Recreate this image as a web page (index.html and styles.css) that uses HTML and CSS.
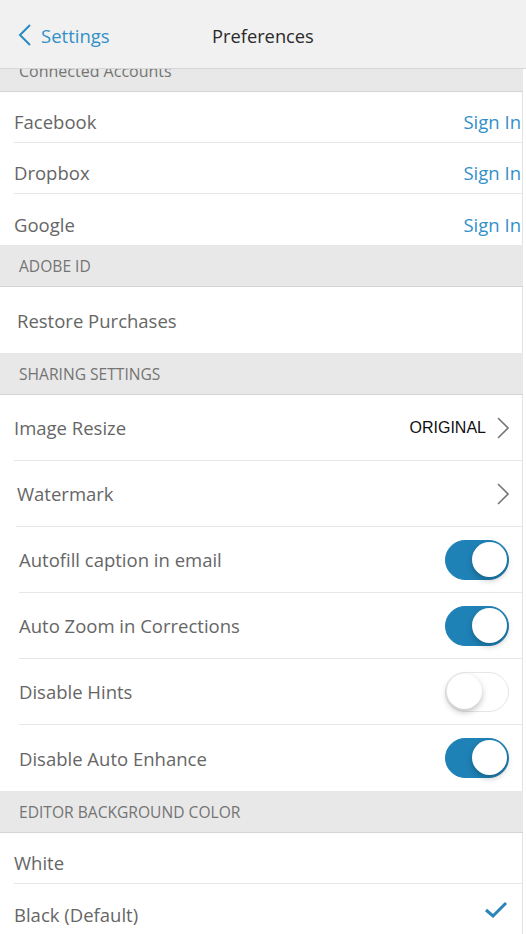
FILE: index.html
```html
<!DOCTYPE html>
<html>
<head>
<meta charset="utf-8">
<link rel="stylesheet" href="styles.css">
</head>
<body>
<div class="screen">
  <header class="nav">
    <div class="back">
      <svg class="back-icon" width="14" height="24" viewBox="0 0 14 24"><path d="M12 2 L2 12 L12 22" fill="none" stroke="#2a8ac4" stroke-width="2"/></svg>
      <span>Settings</span>
    </div>
    <div class="title">Preferences</div>
  </header>
  <main class="content">
    <div class="section-head clipped"><span>Connected Accounts</span></div>
    <div class="row r-account ind-14"><span class="label">Facebook</span><span class="link">Sign In</span></div>
    <div class="row r-account ind-14"><span class="label">Dropbox</span><span class="link">Sign In</span></div>
    <div class="row r-account ind-14 last"><span class="label">Google</span><span class="link">Sign In</span></div>
    <div class="section-head"><span>ADOBE ID</span></div>
    <div class="row r-tall ind-17 last"><span class="label">Restore Purchases</span></div>
    <div class="section-head"><span>SHARING SETTINGS</span></div>
    <div class="row r-tall ind-14"><span class="label">Image Resize</span><span class="value">ORIGINAL<svg class="chev" width="12" height="22" viewBox="0 0 12 22"><path d="M1 1 L11 11 L1 21" fill="none" stroke="#777" stroke-width="1.6"/></svg></span></div>
    <div class="row r-tall ind-17 sep-16"><span class="label">Watermark</span><span class="value"><svg class="chev" width="12" height="22" viewBox="0 0 12 22"><path d="M1 1 L11 11 L1 21" fill="none" stroke="#777" stroke-width="1.6"/></svg></span></div>
    <div class="row r-tall ind-19"><span class="label">Autofill caption in email</span><span class="toggle on"><span class="knob"></span></span></div>
    <div class="row r-tall ind-19"><span class="label">Auto Zoom in Corrections</span><span class="toggle on"><span class="knob"></span></span></div>
    <div class="row r-tall ind-19"><span class="label">Disable Hints</span><span class="toggle"><span class="knob"></span></span></div>
    <div class="row r-tall ind-19 last"><span class="label">Disable Auto Enhance</span><span class="toggle on"><span class="knob"></span></span></div>
    <div class="section-head"><span>EDITOR BACKGROUND COLOR</span></div>
    <div class="row r-account ind-14"><span class="label">White</span></div>
    <div class="row r-account ind-14 last"><span class="label">Black (Default)</span><svg class="check" width="24" height="18" viewBox="0 0 24 18"><path d="M2 9 L9 15 L22 2" fill="none" stroke="#2a84b8" stroke-width="3"/></svg></div>
  </main>
</div>
</body>
</html>
```

FILE: styles.css
```css
* { box-sizing: border-box; }
html, body { margin: 0; padding: 0; background: #fff; }
body {
  font-family: "Open Sans", "Noto Sans", sans-serif;
  color: #555;
  width: 526px;
  height: 934px;
  overflow: hidden;
}
.screen { display: flex; flex-direction: column; height: 934px; }
.nav {
  height: 69px;
  flex: none;
  background: #f1f1f1;
  border-bottom: 1px solid #d6d6d6;
  display: flex;
  align-items: center;
  position: relative;
  z-index: 2;
}
.back {
  display: flex;
  align-items: center;
  gap: 9px;
  padding-left: 18px;
  color: #3290c8;
  font-size: 18.5px;
  width: 212px;
  padding-top: 3px;
}
.back-icon { flex: none; margin-top: -2px; }
.title {
  color: #2a2a2a;
  font-size: 18.3px;
  padding-top: 3px;
}
.content {
  width: 523px;
  border-right: 1px solid #e2e2e2;
  display: flex;
  flex-direction: column;
  flex: 1;
}
.section-head {
  height: 42px;
  flex: none;
  background: #e8e8e8;
  border-bottom: 1px solid #d4d4d4;
  display: flex;
  align-items: center;
  padding-left: 19px;
  font-size: 15.6px;
  color: #747474;
  margin-right: -1px;
}
.section-head.clipped {
  height: 23px;
  align-items: flex-start;
  overflow: hidden;
}
.section-head.clipped span { margin-top: -9px; font-size: 16px; }
.row {
  display: flex;
  align-items: center;
  justify-content: space-between;
  border-bottom: 1px solid #e6e6e6;
  font-size: 18.5px;
  flex: none;
}
.row.last { border-bottom: none; }
.r-account { height: 51px; padding-top: 9px; }
.r-tall { height: 66px; }
.ind-14 { margin-left: 14px; }
.ind-17 { margin-left: 17px; }
.ind-19 { margin-left: 19px; }
.sep-16 { margin-left: 16px; padding-left: 1px; }
.label { color: #666; }
.link { color: #3290c8; font-size: 18.5px; margin-right: 1px; }
.value {
  display: flex;
  align-items: center;
  gap: 11px;
  font-family: "Liberation Sans", Arial, sans-serif;
  font-size: 16px;
  color: #111;
  padding-right: 13px;
}
.chev { display: block; }
.toggle {
  width: 64px;
  height: 40px;
  border-radius: 20px;
  background: #fff;
  border: 1.5px solid #e6e6e6;
  position: relative;
  margin-right: 13px;
  flex: none;
}
.toggle.on {
  background: #1f82b6;
  border-color: #1f82b6;
}
.knob {
  position: absolute;
  top: 1px;
  left: 1px;
  width: 35px;
  height: 35px;
  border-radius: 50%;
  background: #fff;
  box-shadow: 0 3px 6px rgba(0,0,0,0.25);
}
.toggle.on .knob { left: auto; right: 1px; }
.r-account .check { margin-right: 14px; margin-top: -9px; }
```
